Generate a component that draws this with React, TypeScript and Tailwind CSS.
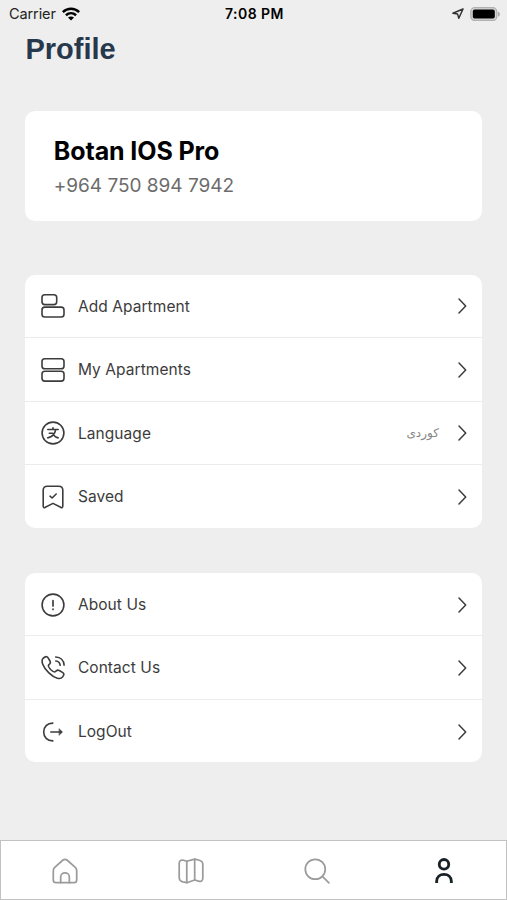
import React from 'react';

interface MenuItem {
  label: string;
  icon: React.ReactNode;
  value?: string;
}

interface IconProps {
  children: React.ReactNode;
  className?: string;
}

// Shared 24px outline icon
const Icon: React.FC<IconProps> = ({ children, className = 'size-6 text-[#3c3c3c]' }) => (
  <svg
    viewBox="0 0 24 24"
    fill="none"
    stroke="currentColor"
    strokeWidth="1.6"
    strokeLinecap="round"
    strokeLinejoin="round"
    className={`shrink-0 overflow-visible ${className}`}
  >
    {children}
  </svg>
);

const LISTING_ITEMS: MenuItem[] = [
  {
    label: 'Add Apartment',
    icon: (
      <Icon>
        <rect x="1" y="0.8" width="14.7" height="9.8" rx="2.8" />
        <rect x="1" y="13.1" width="22" height="9.9" rx="2.8" />
      </Icon>
    ),
  },
  {
    label: 'My Apartments',
    icon: (
      <Icon>
        <rect x="1" y="0.8" width="22" height="9.9" rx="2.8" />
        <rect x="1" y="13.2" width="22" height="9.9" rx="2.8" />
      </Icon>
    ),
  },
  {
    label: 'Language',
    value: 'کوردی',
    icon: (
      <Icon>
        <circle cx="12" cy="12" r="10.9" />
        <path d="M6.8 8.5h10.4M12 6.8v1.7M14.7 8.6c-.7 4.1-3.5 7.2-7.9 8.3M8.3 12.2h3.2c1.1 2.4 2.7 4 5.6 4.7" />
      </Icon>
    ),
  },
  {
    label: 'Saved',
    icon: (
      <Icon>
        <path d="M2.2 5.2c0-2.6 1.4-4 4-4h11.6c2.6 0 4 1.4 4 4v15.9c0 1.5-.9 2-2.1 1.2L12 18.4l-7.7 3.9c-1.2.8-2.1.3-2.1-1.2Z" />
        <path d="m9 11.2 2.1 1.8L15.2 9" />
      </Icon>
    ),
  },
];

const SUPPORT_ITEMS: MenuItem[] = [
  {
    label: 'About Us',
    icon: (
      <Icon>
        <circle cx="12" cy="12" r="10.9" />
        <path d="M12 7.7v5.2M12 16.1v.4" strokeWidth="1.7" />
      </Icon>
    ),
  },
  {
    label: 'Contact Us',
    icon: (
      <Icon>
        <path d="M2.4 2 4 1c1.2-.7 2.4-.4 3.1.8L9 5c.6 1.1.4 2.1-.4 3l-.9.9c-.8.9-.2 2.2 1.9 4.6 2.5 2.4 3.8 3 4.7 2.2l1-.9c.9-.8 1.9-1 3-.3l3.5 2.1c1.1.7 1.4 1.9.6 3l-1 1.5c-1.8 2.6-7.2 1.9-13.5-4.2C1.3 10.5-.4 4.5 2.4 2Z" />
        <path d="M14.7 1c4.8.2 8.1 3.4 8.4 8.1M14.8 5c2.6.3 4.1 1.8 4.4 4.3" />
      </Icon>
    ),
  },
  {
    label: 'LogOut',
    icon: (
      <Icon>
        <path d="M11.8 3.1C6.2 3.1 2.7 6.8 2.7 12s3.5 8.9 9.1 8.9M9.8 12h10" />
        <path d="m18.3 8.9 3.2 3.1-3.2 3.1Z" fill="currentColor" strokeWidth="0.6" />
      </Icon>
    ),
  },
];

const StatusBar: React.FC = () => (
  <div className="flex h-7 items-center justify-between pr-[7px] pl-[9px] text-black">
    <div className="flex w-[150px] items-center gap-1.5">
      <span className="text-[14.5px] tracking-[-0.1px] text-[#222]">Carrier</span>
      <svg viewBox="0 0 18 14" className="-mt-px h-3.5 w-[18px]" fill="none" stroke="currentColor" strokeWidth="2.5">
        <path d="M.8 5.1c4.7-4.5 11.7-4.5 16.4 0M3.9 8.2c3-2.7 7.2-2.7 10.2 0" />
        <path d="M6 10.5c1.8-1.5 4.2-1.5 6 0l-3 3Z" fill="currentColor" stroke="none" />
      </svg>
    </div>
    <span className="-mt-px text-[14px] font-semibold tracking-[0.45px]">7:08 PM</span>
    <div className="flex w-[150px] items-center justify-end gap-1.5">
      <svg viewBox="0 0 12 12" className="size-3 text-[#333]" fill="none" stroke="currentColor" strokeWidth="1.5" strokeLinejoin="round">
        <path d="M11 1 .9 5.2l4.7.9L6.8 10.3Z" />
      </svg>
      <svg viewBox="0 0 30 14" className="-mt-px h-3.5 w-[30px]">
        <rect x="0.8" y="0.7" width="26" height="12.8" rx="4" fill="#d4d4d4" stroke="#b0b0b0" strokeWidth="1.3" />
        <rect x="2.8" y="2.6" width="22" height="9" rx="1.8" fill="#000" />
        <path d="M28 4.6c2.5 1.2 2.5 4 0 5.2Z" fill="#aaa" />
      </svg>
    </div>
  </div>
);

const MenuRow: React.FC<{ item: MenuItem }> = ({ item }) => (
  <button className="flex h-[63.5px] w-full items-center border-b border-[#ececec] pt-[0.8px] pr-[12.5px] pl-[15.5px] text-left last:h-[62.5px] last:border-b-0">
    {item.icon}
    <span className="ml-[13px] flex-1 text-[15.5px] tracking-[0.07px] text-[#3c3c3c]">{item.label}</span>
    {item.value && (
      <span dir="rtl" className="mr-[15px] font-['DejaVu_Sans',sans-serif] text-[12px] text-[#858585]">
        {item.value}
      </span>
    )}
    <svg viewBox="0 0 16 18" className="h-[18px] w-4 text-[#3c3c3c]" fill="none" stroke="currentColor" strokeWidth="1.5" strokeLinecap="round" strokeLinejoin="round">
      <path d="m5 2 6.7 7L5 16" />
    </svg>
  </button>
);

const MenuCard: React.FC<{ items: MenuItem[] }> = ({ items }) => (
  <div className="overflow-hidden rounded-[10px] bg-white">
    {items.map((item) => (
      <MenuRow key={item.label} item={item} />
    ))}
  </div>
);

const TabBar: React.FC = () => (
  <nav className="grid h-[60px] grid-cols-4 place-items-center border border-[#c2c2c2] bg-white pt-px pl-px text-[#9b9b9b]">
    <Icon className="size-[26px]">
      <path d="M1.2 11.7c0-1.4.3-2.2 1.3-3.1l7.4-6.5c1.4-1.2 2.8-1.2 4.2 0l7.4 6.5c1 .9 1.3 1.7 1.3 3.1v8.6c0 1.7-.8 2.5-2.5 2.5H3.7c-1.7 0-2.5-.8-2.5-2.5Z" />
      <path d="M8 22.8v-5.2c0-5.1 8-5.1 8 0v5.2" />
    </Icon>
    <Icon className="size-[26px]">
      <path d="M1.1 5c0-3 2-3.5 4-2.9l3 .9 7.3-1.9 4.2 1c2.4.6 3.3 1.8 3.3 4v12.6c0 2.6-1.8 3.2-3.8 2.7l-3.7-1.1-7.3 2.5-3.6-.8c-2.4-.6-3.4-1.7-3.4-4Z" />
      <path d="M8.1 3v19.8M15.4 1.1v19.2" />
    </Icon>
    <Icon className="size-[26px]">
      <circle cx="10.4" cy="10.4" r="9.2" />
      <path d="m17 17 6 6" />
    </Icon>
    <Icon className="ml-px size-[26px] text-[#172126]">
      <circle cx="12" cy="5.8" r="4.4" strokeWidth="2.6" />
      <path d="M5.2 23v-1.2c0-9 13.6-9 13.6 0V23" strokeWidth="2.6" strokeLinecap="butt" />
    </Icon>
  </nav>
);

const App: React.FC = () => {
  return (
    <div className="flex h-[900px] w-[507px] flex-col overflow-hidden bg-[#eeeeee] font-['Inter',sans-serif]">
      <StatusBar />
      <main className="flex-1 pr-[24.6px] pl-[25.4px]">
        <h1 className="font-['Liberation_Sans',sans-serif] text-[29px] leading-[43px] font-bold text-[#26384b]">Profile</h1>
        <section className="mt-10 h-[110px] rounded-[10px] bg-white pt-6 pl-[28.4px]">
          <h2 className="text-[25px] leading-8 font-bold tracking-[-0.1px] text-black">Botan IOS Pro</h2>
          <p className="mt-[3px] text-[19px] leading-[31px] tracking-[-0.02px] text-[#6c6c6c]">+964 750 894 7942</p>
        </section>
        <div className="mt-[53.7px] flex flex-col gap-[45.2px]">
          <MenuCard items={LISTING_ITEMS} />
          <MenuCard items={SUPPORT_ITEMS} />
        </div>
      </main>
      <TabBar />
    </div>
  );
};

export default App;
